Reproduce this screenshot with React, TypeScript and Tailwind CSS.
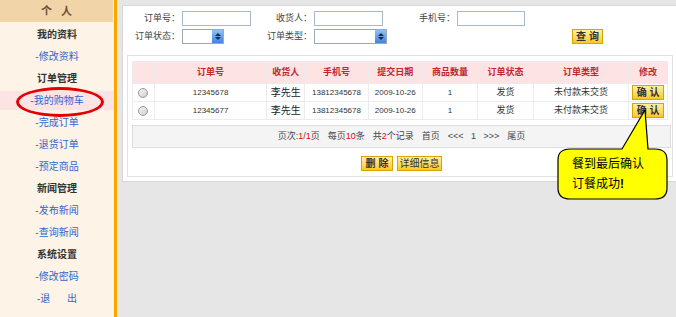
import React from 'react';

const font = { fontFamily: '"Liberation Sans", "Noto Sans CJK SC", sans-serif' };

const menu: { text: string; head?: boolean; active?: boolean }[] = [
  { text: '我的资料', head: true },
  { text: '-修改资料' },
  { text: '订单管理', head: true },
  { text: '-我的购物车', active: true },
  { text: '-完成订单' },
  { text: '-退货订单' },
  { text: '-预定商品' },
  { text: '新闻管理', head: true },
  { text: '-发布新闻' },
  { text: '-查询新闻' },
  { text: '系统设置', head: true },
  { text: '-修改密码' },
  { text: '-退\u00a0\u00a0\u00a0\u00a0\u00a0\u00a0出' },
];

const orders = [
  { no: '12345678', name: '李先生', phone: '13812345678', date: '2009-10-26', qty: '1', status: '发货', type: '未付款未交货' },
  { no: '12345677', name: '李先生', phone: '13812345678', date: '2009-10-26', qty: '1', status: '发货', type: '未付款未交货' },
];

const cols = ['', '订单号', '收货人', '手机号', '提交日期', '商品数量', '订单状态', '订单类型', '修改'];
const widths = ['w-[22px]', 'w-[114px]', 'w-[38px]', 'w-[64px]', 'w-[54px]', 'w-[56px]', 'w-[56px]', 'w-[96px]', 'w-[39px]'];

const YellowButton: React.FC<{ label: string; className?: string }> = ({ label, className }) => (
  <div
    className={`flex items-center justify-center h-[15px] border border-[#d9a300] bg-gradient-to-b from-[#fff0a0] to-[#f8c814] text-[10px] font-bold text-[#333] leading-none whitespace-nowrap ${className || ''}`}
  >
    {label}
  </div>
);

const Select: React.FC<{ w: string }> = ({ w }) => (
  <div className={`flex h-[15px] ${w} border border-[#a0a8b4] bg-white`}>
    <div className="flex-1" />
    <div className="w-[11px] bg-gradient-to-b from-[#8fc3f5] to-[#3a86e0] flex flex-col items-center justify-center gap-[1px]">
      <div className="w-0 h-0 border-l-[3px] border-r-[3px] border-b-[3px] border-l-transparent border-r-transparent border-b-[#1b2a4a]" />
      <div className="w-0 h-0 border-l-[3px] border-r-[3px] border-t-[3px] border-l-transparent border-r-transparent border-t-[#1b2a4a]" />
    </div>
  </div>
);

const Label: React.FC<{ w: string; text: string }> = ({ w, text }) => (
  <div className={`${w} shrink-0 text-right text-[9px] text-[#444] pr-[2px] whitespace-nowrap`}>{text}</div>
);

const cell = 'border border-[#ececec] p-0 text-center whitespace-nowrap';

export default function App() {
  return (
    <div className="relative flex w-[676px] h-[317px] bg-[#e6e6e6] overflow-hidden" style={font}>
      <aside className="relative w-[114px] shrink-0 h-full bg-[#fdf3e6] flex flex-col">
        <div className="h-[22px] bg-[#f1d5a8] flex items-center justify-center text-[11px] font-bold text-[#6b5232] mr-[1px]">
          个&nbsp;&nbsp;&nbsp;人
        </div>
        {menu.map((m) => (
          <div key={m.text} className="h-[22px] flex items-center justify-center">
            <div
              className={`w-full h-[19px] mt-[3px] flex items-center justify-center text-[10px] whitespace-nowrap ${
                m.head ? 'font-bold text-[#333]' : 'text-[#2f66cf]'
              } ${m.active ? 'bg-[#fde4e4]' : ''}`}
            >
              {m.text}
            </div>
          </div>
        ))}
        <div className="absolute left-[16px] top-[87px] w-[88px] h-[30px] rounded-[50%] border-[3px] border-[#e00000]" />
      </aside>
      <div className="w-[3px] shrink-0 h-full bg-[#f6a800]" />
      <main className="flex-1 min-w-0 pl-[5px] pt-[5px]">
        <div className="h-[177px] bg-white border border-[#d8d8d8] px-[4px] -mr-[2px]">
          <div className="h-[49px] pt-[5px] flex flex-col gap-[3px]">
            <div className="flex items-center">
              <Label w="w-[55px]" text="订单号：" />
              <div className="w-[69px] h-[15px] border border-[#a7b8cc]" />
              <Label w="w-[63px]" text="收货人：" />
              <div className="w-[69px] h-[15px] border border-[#a7b8cc]" />
              <Label w="w-[74px]" text="手机号：" />
              <div className="w-[68px] h-[15px] border border-[#a7b8cc]" />
            </div>
            <div className="flex items-center">
              <Label w="w-[55px]" text="订单状态：" />
              <Select w="w-[42px]" />
              <Label w="w-[90px]" text="订单类型：" />
              <Select w="w-[73px]" />
              <YellowButton label="查 询" className="ml-[185px] w-[31px]" />
            </div>
          </div>
          <div className="h-[122px] border border-[#e2e2e2] px-[4px] pt-[5px]">
            <table className="border-collapse text-[9px] text-[#333] table-fixed">
              <thead>
                <tr className="h-[22px] bg-[#fde3e3]">
                  {cols.map((c, i) => (
                    <th key={i} className={`${widths[i]} border border-[#ececec] font-bold text-[#c3262c] p-0 whitespace-nowrap`}>
                      {c}
                    </th>
                  ))}
                </tr>
              </thead>
              <tbody>
                {orders.map((o) => (
                  <tr key={o.no} className="h-[18px]">
                    <td className="border border-[#ececec] p-0">
                      <div className="mx-auto w-[10px] h-[10px] rounded-full border border-[#9a9a9a] bg-gradient-to-br from-[#f4f4f4] to-[#d0d0d0]" />
                    </td>
                    <td className={`${cell} text-[8px]`}>{o.no}</td>
                    <td className={`${cell} text-[10px] text-[#222]`}>{o.name}</td>
                    <td className={`${cell} text-[8px]`}>{o.phone}</td>
                    <td className={`${cell} text-[8px]`}>{o.date}</td>
                    <td className={`${cell} text-[8px]`}>{o.qty}</td>
                    <td className={cell}>{o.status}</td>
                    <td className={cell}>{o.type}</td>
                    <td className="border border-[#ececec] p-0">
                      <YellowButton label="确 认" className="mx-auto w-[32px] h-[14px]" />
                    </td>
                  </tr>
                ))}
              </tbody>
            </table>
            <div className="mt-[5px] w-[539px] h-[23px] bg-[#f4f4f4] border border-[#dddddd] flex items-center justify-center text-[9px] text-[#444] gap-[8px] whitespace-nowrap">
              <span>
                页次:<span className="text-[#e00]">1</span>/<span className="text-[#e00]">1</span>页
              </span>
              <span>
                每页<span className="text-[#e00]">10</span>条
              </span>
              <span>
                共<span className="text-[#e00]">2</span>个记录
              </span>
              <span>首页</span>
              <span>&lt;&lt;&lt;&nbsp;&nbsp;&nbsp;1&nbsp;&nbsp;&nbsp;&gt;&gt;&gt;</span>
              <span>尾页</span>
            </div>
            <div className="mt-[8px] w-[539px] flex justify-center gap-[4px]">
              <YellowButton label="删 除" className="w-[32px]" />
              <YellowButton label="详细信息" className="w-[45px] font-normal" />
            </div>
          </div>
        </div>
      </main>
      <svg className="absolute left-0 top-0 pointer-events-none" width="676" height="317">
        <path
          d="M 570 149 L 622 149 L 645 110 L 648 149 L 655 149 Q 667 149 667 160 L 667 188 Q 667 199 655 199 L 570 199 Q 558 199 558 188 L 558 160 Q 558 149 570 149 Z"
          fill="#ffff00"
          stroke="#000"
          strokeWidth="1.2"
        />
      </svg>
      <div className="absolute left-[572px] top-[154px] text-[12px] leading-[20px] text-black">
        <div>餐到最后确认</div>
        <div>
          订餐成功<span className="font-bold">!</span>
        </div>
      </div>
    </div>
  );
}
